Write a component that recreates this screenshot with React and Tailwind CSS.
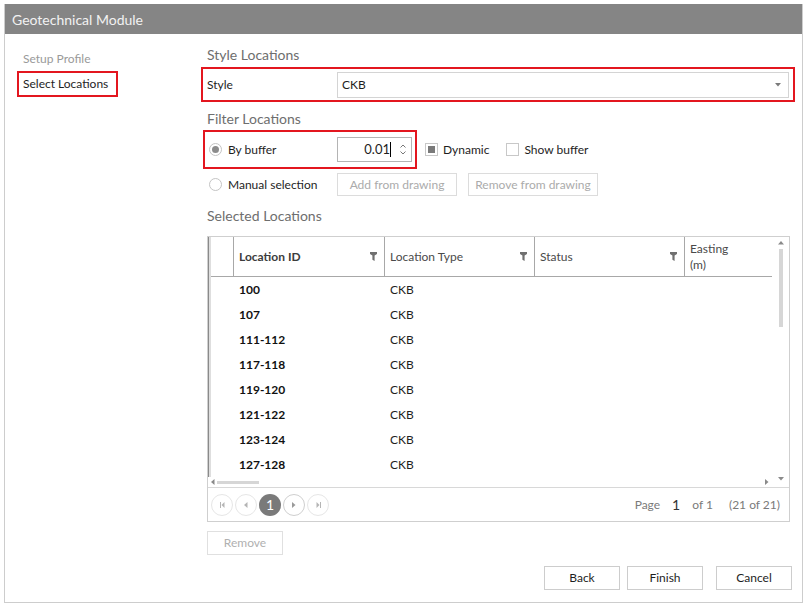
import React from "react";

const ROWS = ["100", "107", "111-112", "117-118", "119-120", "121-122", "123-124", "127-128"];

function Funnel() {
  return (
    <svg width="7" height="9" viewBox="0 0 7 9" className="shrink-0">
      <path d="M0 0H7V2L4.6 3.6V9L2.4 7.8V3.6L0 2Z" fill="#707070" />
    </svg>
  );
}

function Tri({ dir = "down", color = "#8a8a8a" }) {
  const d = {
    down: "M0 0H6L3 3.5Z",
    up: "M0 3.5H6L3 0Z",
    left: "M3.5 0V6L0 3Z",
    right: "M0 0V6L3.5 3Z",
  }[dir];
  const w = dir === "left" || dir === "right" ? 4 : 6;
  const h = dir === "left" || dir === "right" ? 6 : 4;
  return (
    <svg width={w} height={h} viewBox={`0 0 ${w} ${h}`}>
      <path d={d} fill={color} />
    </svg>
  );
}

function Radio({ checked }) {
  return (
    <span className="w-[13px] h-[13px] rounded-full border border-[#c4c4c4] flex items-center justify-center shrink-0">
      {checked && <span className="w-[7px] h-[7px] rounded-full bg-[#8c8c8c]" />}
    </span>
  );
}

function Check({ checked }) {
  return (
    <span className="w-[13px] h-[13px] border border-[#c8c8c8] flex items-center justify-center shrink-0">
      {checked && <span className="w-[7px] h-[7px] bg-[#7a7a7a]" />}
    </span>
  );
}

function PagerBtn({ children, active, strong }) {
  return (
    <span
      className={
        active
          ? "w-[22px] h-[22px] rounded-full bg-[#7a7a7a] text-white text-[14px] flex items-center justify-center"
          : strong
          ? "w-[22px] h-[22px] rounded-full border border-[#cfcfcf] flex items-center justify-center"
          : "w-[22px] h-[22px] rounded-full border border-[#e6e6e6] flex items-center justify-center"
      }
    >
      {children}
    </span>
  );
}

function EdgeGlyph({ dir }) {
  return (
    <svg width="5" height="6" viewBox="0 0 5 6">
      {dir === "first" ? (
        <>
          <rect x="0" y="0" width="1" height="6" fill="#b5b5b5" />
          <path d="M4.5 0V6L1.5 3Z" fill="#b5b5b5" />
        </>
      ) : (
        <>
          <path d="M0.5 0V6L3.5 3Z" fill="#b5b5b5" />
          <rect x="4" y="0" width="1" height="6" fill="#b5b5b5" />
        </>
      )}
    </svg>
  );
}

export default function App() {
  return (
    <div className="w-[806px] h-[606px] bg-white pt-[4px] pl-[4px] text-[12px] text-[#1e1e1e]" style={{ fontFamily: "Lato, 'Open Sans', sans-serif" }}>
      <div className="w-[799px] h-[599px] border border-t-0 border-[#cdcdcd] flex flex-col">
        <div className="h-[30px] bg-[#858585] text-[#f2f2f2] text-[14px] pl-[7px] flex items-center">Geotechnical Module</div>
        <div className="flex flex-1">
          {/* left nav */}
          <div className="w-[196px] shrink-0 pt-[16px]">
            <div className="h-[18px] leading-[18px] pl-[18px] text-[#9a9a9a]">Setup Profile</div>
            <div className="mt-[3px] ml-[12px] w-[101px] h-[26px] border-2 border-[#e3161f] pl-[4px] flex items-center">Select Locations</div>
          </div>

          {/* main */}
          <div className="flex-1 pt-[12px] flex flex-col">
            <div className="pl-[6px] h-[18px] leading-[18px] text-[14px] text-[#6e6e6e]">Style Locations</div>
            <div className="mt-[3px] w-[594px] h-[35px] border-2 border-[#e3161f] flex items-center pl-[4px]">
              <span className="w-[130px]">Style</span>
              <div className="w-[452px] h-[26px] border border-[#d4d4d4] flex items-center pl-[4px] pr-[7px]">
                <span className="flex-1">CKB</span>
                <Tri dir="down" color="#7a7a7a" />
              </div>
            </div>

            <div className="mt-[8px] pl-[6px] h-[18px] leading-[18px] text-[14px] text-[#6e6e6e]">Filter Locations</div>
            <div className="mt-[2px] flex items-center">
              <div className="ml-[2px] w-[214px] h-[39px] border-2 border-[#e3161f] flex items-center pl-[4px]">
                <Radio checked />
                <span className="ml-[6px] w-[109px]">By buffer</span>
                <div className="w-[75px] h-[25px] border border-[#b4b4b4] flex items-center justify-end pr-[5px]">
                  <span className="text-[13px]">0.01</span>
                  <span className="w-px h-[15px] bg-black mr-[9px]" />
                  <span className="flex flex-col gap-[3px]">
                    <svg width="6" height="4" viewBox="0 0 6 4"><path d="M0.5 3.5L3 1L5.5 3.5" stroke="#777" strokeWidth="1" fill="none" /></svg>
                    <svg width="6" height="4" viewBox="0 0 6 4"><path d="M0.5 0.5L3 3L5.5 0.5" stroke="#777" strokeWidth="1" fill="none" /></svg>
                  </span>
                </div>
              </div>
              <span className="ml-[8px]"><Check checked /></span>
              <span className="ml-[5px]">Dynamic</span>
              <span className="ml-[17px]"><Check /></span>
              <span className="ml-[5px]">Show buffer</span>
            </div>

            <div className="mt-[4px] flex items-center h-[23px]">
              <span className="ml-[8px]"><Radio /></span>
              <span className="ml-[6px] w-[109px]">Manual selection</span>
              <span className="h-[23px] w-[120px] border border-[#dcdcdc] flex items-center justify-center text-[#ababab]">Add from drawing</span>
              <span className="ml-[11px] h-[23px] w-[130px] border border-[#dcdcdc] flex items-center justify-center text-[#ababab]">Remove from drawing</span>
            </div>

            <div className="mt-[11px] pl-[6px] h-[18px] leading-[18px] text-[14px] text-[#6e6e6e]">Selected Locations</div>

            {/* grid */}
            <div className="mt-[11px] ml-[6px] w-[583px] h-[286px] border border-[#cfcfcf] flex flex-col">
              <div className="flex h-[250px]">
                <div className="flex-1 flex flex-col overflow-hidden">
                  <div className="flex-1 flex overflow-hidden">
                    <div className="w-[3px] bg-[#dedede] border-l border-[#8a8a8a] shrink-0" />
                    <div className="flex-1 flex flex-col">
                      {/* header */}
                      <div className="h-[40px] flex border-b border-[#a8a8a8] shrink-0">
                        <div className="w-[23px] border-r border-[#a8a8a8]" />
                        <div className="w-[151px] border-r border-[#a8a8a8] flex items-center pl-[5px] pr-[7px]">
                          <span className="flex-1 font-bold text-[#3c3c3c]">Location ID</span>
                          <Funnel />
                        </div>
                        <div className="w-[150px] border-r border-[#a8a8a8] flex items-center pl-[5px] pr-[7px]">
                          <span className="flex-1 text-[#4a4a4a]">Location Type</span>
                          <Funnel />
                        </div>
                        <div className="w-[150px] border-r border-[#a8a8a8] flex items-center pl-[5px] pr-[7px]">
                          <span className="flex-1 text-[#4a4a4a]">Status</span>
                          <Funnel />
                        </div>
                        <div className="flex-1 pl-[5px] flex flex-col justify-center leading-[16px] text-[#4a4a4a]">
                          <span>Easting</span>
                          <span>(m)</span>
                        </div>
                      </div>
                      {/* rows */}
                      <div className="flex flex-col">
                        {ROWS.map((r) => (
                          <div key={r} className="h-[25px] flex items-center shrink-0">
                            <span className="w-[23px]" />
                            <span className="w-[151px] pl-[5px] font-bold text-[#111]">{r}</span>
                            <span className="w-[150px] pl-[5px]">CKB</span>
                          </div>
                        ))}
                      </div>
                    </div>
                  </div>
                  {/* horizontal scrollbar */}
                  <div className="h-[10px] flex items-center pl-[3px] pr-[3px] shrink-0">
                    <Tri dir="left" />
                    <span className="ml-[2px] w-[42px] h-[3px] bg-[#d6d6d6]" />
                    <span className="flex-1" />
                    <Tri dir="right" />
                  </div>
                </div>
                {/* vertical scrollbar */}
                <div className="w-[17px] flex flex-col items-center pt-[4px] pb-[6px]">
                  <Tri dir="up" />
                  <span className="mt-[4px] w-[4px] h-[78px] bg-[#d6d6d6]" />
                  <span className="flex-1" />
                  <Tri dir="down" />
                </div>
              </div>
              {/* pager */}
              <div className="flex-1 border-t border-[#d8d8d8] flex items-center pl-[3px] pr-[9px] text-[#7a7a7a]">
                <div className="flex items-center gap-[2px]">
                  <PagerBtn><EdgeGlyph dir="first" /></PagerBtn>
                  <PagerBtn><Tri dir="left" color="#b5b5b5" /></PagerBtn>
                  <PagerBtn active>1</PagerBtn>
                  <PagerBtn strong><Tri dir="right" color="#9a9a9a" /></PagerBtn>
                  <PagerBtn><EdgeGlyph dir="last" /></PagerBtn>
                </div>
                <span className="flex-1" />
                <span>Page</span>
                <span className="ml-[12px] text-[14px] text-[#333]">1</span>
                <span className="ml-[12px]">of 1</span>
                <span className="ml-[16px]">(21 of 21)</span>
              </div>
            </div>

            <div className="mt-[9px] ml-[6px] w-[76px] h-[24px] border border-[#e0e0e0] flex items-center justify-center text-[#b0b0b0]">Remove</div>

            <div className="mt-[11px] flex justify-end pr-[10px] gap-[7px]">
              <span className="w-[76px] h-[24px] border border-[#cdcdcd] flex items-center justify-center">Back</span>
              <span className="w-[76px] h-[24px] border border-[#cdcdcd] flex items-center justify-center">Finish</span>
              <span className="ml-[6px] w-[76px] h-[24px] border border-[#cdcdcd] flex items-center justify-center">Cancel</span>
            </div>
          </div>
        </div>
      </div>
    </div>
  );
}
